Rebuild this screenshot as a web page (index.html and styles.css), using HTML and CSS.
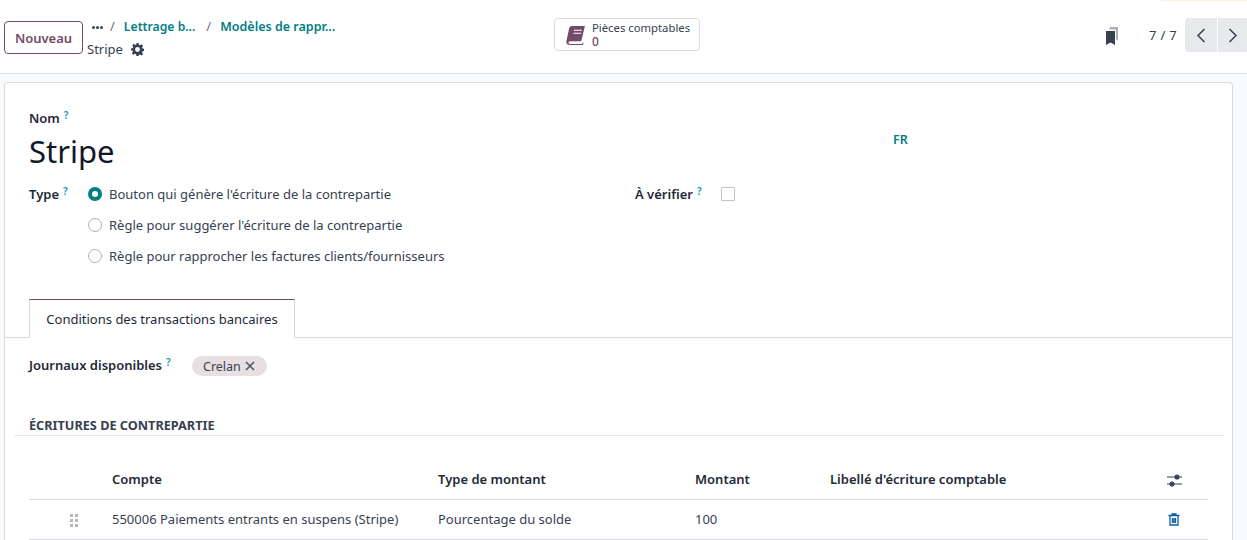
FILE: index.html
```html
<!DOCTYPE html>
<html lang="fr">
<head>
<meta charset="utf-8">
<title>Stripe</title>
<link rel="stylesheet" href="styles.css">
</head>
<body>
<div class="top-strip"></div>
<header class="control">
  <div class="left">
    <button class="btn-new">Nouveau</button>
    <div class="crumbs">
      <div class="crumb-row">
        <svg class="dots" width="11" height="3" viewBox="0 0 11 3"><circle cx="1.500" cy="1.500" r="1.500"/><circle cx="5.500" cy="1.500" r="1.500"/><circle cx="9.500" cy="1.500" r="1.500"/></svg>
        <span class="sep sep-a">/</span>
        <a class="crumb crumb-a">Lettrage b...</a>
        <span class="sep sep-b">/</span>
        <a class="crumb crumb-b">Modèles de rappr...</a>
      </div>
      <div class="crumb-current">
        <span>Stripe</span>
        <svg class="gear" width="13" height="13" viewBox="0 0 24 24"><path fill-rule="evenodd" d="M10 0h4l.7 3.400 2 .8L19.600 2.300l2.800 2.800-1.900 2.900.8 2 3.400.7v4l-3.400.7-.8 2 1.900 2.900-2.800 2.800-2.900-1.900-2 .8L14 24h-4l-.7-3.400-2-.8-2.900 1.900-2.800-2.800 1.900-2.900-.8-2L0 14v-4l3.400-.7.8-2-1.900-2.900 2.800-2.800 2.900 1.900 2-.8zM12 7.500a4.500 4.500 0 1 0 0 9 4.500 4.500 0 0 0 0-9z"/></svg>
      </div>
    </div>
  </div>
  <div class="center">
    <button class="stat">
      <svg class="book" width="20" height="21" viewBox="0 0 19 20"><path d="M5.500 1H18l-.3 1.200L14.500 15.500H4.200C3 15.500 2.500 16.100 2.400 16.700 2.300 17.400 2.800 18 3.800 18h11.400l.6-.9.900-.6-.5 2.500H3.200C1.300 19 0 17.700.3 15.800L3 3.200C3.300 1.900 4.200 1 5.500 1z"/><path class="book-line" d="M7.500 5h7.500M7 7.800h7.500" /></svg>
      <span class="stat-text"><span class="stat-label">Pièces comptables</span><span class="stat-value">0</span></span>
    </button>
  </div>
  <div class="right">
    <svg class="bookmarks" width="14" height="18" viewBox="0 0 14 18"><path class="bm-back" d="M4.500 0H13v13.500L11 12V2.500H4.500z"/><path d="M1 4h9v14l-4.500-2.500L1 18z"/></svg>
    <span class="pager">7 / 7</span>
    <div class="pager-btns">
      <button class="nav nav-prev"><svg width="10" height="15" viewBox="0 0 10 15"><path d="M8.500 1 2 7.500 8.500 14"/></svg></button>
      <button class="nav nav-next"><svg width="10" height="15" viewBox="0 0 10 15"><path d="M1.500 1 8 7.500 1.500 14"/></svg></button>
    </div>
  </div>
</header>
<main class="content">
  <section class="sheet">
    <div class="head">
      <div class="name-label"><b>Nom</b><sup class="help">?</sup></div>
      <div class="title-row">
        <h1>Stripe</h1>
        <span class="lang">FR</span>
      </div>
    </div>
    <div class="fields">
      <div class="type-col">
        <div class="field-label type-label"><b>Type</b><sup class="help">?</sup></div>
        <div class="radios">
          <div class="radio-row"><span class="radio on"></span>Bouton qui génère l'écriture de la contrepartie</div>
          <div class="radio-row"><span class="radio"></span>Règle pour suggérer l'écriture de la contrepartie</div>
          <div class="radio-row"><span class="radio"></span>Règle pour rapprocher les factures clients/fournisseurs</div>
        </div>
      </div>
      <div class="verify">
        <div class="field-label verify-label"><b>À vérifier</b><sup class="help">?</sup></div>
        <span class="check"></span>
      </div>
    </div>
    <div class="tabs"><div class="tab">Conditions des transactions bancaires</div></div>
    <div class="journal">
      <div class="field-label journal-label"><b>Journaux disponibles</b><sup class="help">?</sup></div>
      <span class="tag">Crelan<svg width="10" height="10" viewBox="0 0 10 10"><path d="M1 1l8 8M9 1 1 9"/></svg></span>
    </div>
    <div class="separator">ÉCRITURES DE CONTREPARTIE</div>
    <table class="lines">
      <thead>
        <tr>
          <th class="c-h"></th>
          <th class="c-a">Compte</th>
          <th class="c-t">Type de montant</th>
          <th class="c-m">Montant</th>
          <th class="c-l">Libellé d'écriture comptable</th>
          <th class="c-o"><svg class="sliders" width="15" height="13" viewBox="0 0 15 13"><path d="M0 3h15M0 10h15"/><circle cx="10" cy="3" r="2"/><circle cx="5" cy="10" r="2"/></svg></th>
        </tr>
      </thead>
      <tbody>
        <tr>
          <td class="c-h"><svg class="grip" width="9" height="13" viewBox="0 0 9 13"><path d="M0 0h3v3H0zM5 0h3v3H5zM0 5h3v3H0zM5 5h3v3H5zM0 10h3v3H0zM5 10h3v3H5z"/></svg></td>
          <td class="c-a">550006 Paiements entrants en suspens (Stripe)</td>
          <td class="c-t">Pourcentage du solde</td>
          <td class="c-m">100</td>
          <td class="c-l"></td>
          <td class="c-o"><svg class="trash" width="12" height="13" viewBox="0 0 12 13"><path d="M4 2V1h4v1M.5 2.500h11M2 2.500V12h8V2.500M4.500 5v5M6 5v5M7.500 5v5"/></svg></td>
        </tr>
      </tbody>
    </table>
  </section>
</main>
</body>
</html>
```
FILE: styles.css
```css
* { box-sizing: border-box; }
html, body { margin: 0; height: 540px; overflow: hidden; }
body {
  font-family: "Noto Sans", "Open Sans", sans-serif;
  font-size: 13px;
  color: #374151;
  background: #fff;
  position: relative;
}
button { font-family: inherit; }
.top-strip { position: absolute; top: 0; right: 0; width: 87px; height: 1px; background: #fdf3df; }
.control {
  height: 74px;
  border-bottom: 1px solid #d8dadd;
  background: #fff;
  display: grid;
  grid-template-columns: 554px 1fr auto;
  align-items: start;
}
.left { display: flex; padding: 21px 0 0 4px; }
.btn-new {
  width: 79px; height: 33px;
  border: 1px solid #714b67; border-radius: 4px;
  background: #fff; color: #714b67;
  font-size: 13px; font-weight: 600; padding: 0;
}
.crumbs { margin: -4px 0 0 4px; }
.crumb-row { display: flex; align-items: center; height: 18px; padding-left: 5px; }
.dots { fill: #374151; margin-top: 2px; width: 11px; }
.sep { color: #6b7280; font-size: 13px; }
.sep-a { margin: 0 9px 0 7px; }
.sep-b { margin: 0 9px 0 11px; }
.crumb { color: #017e84; font-weight: 600; font-size: 12.200px; white-space: nowrap; }
.crumb-b { font-size: 12.500px; }
.crumb-current { display: flex; align-items: center; gap: 8px; height: 22px; margin-top: 3px; }
.crumb-current span { font-size: 13px; }
.gear { fill: #374151; }
.center { padding-top: 18px; }
.stat {
  display: flex; align-items: center; gap: 6px;
  width: 146px; height: 33px;
  border: 1px solid #d8dadd; border-radius: 4px;
  background: #fff; padding: 1px 0 0 11px; color: #374151;
}
.book { fill: #714b67; flex: none; }
.book-line { stroke: #fff; stroke-width: 1; fill: none; }
.stat-text { display: flex; flex-direction: column; text-align: left; line-height: 14px; font-size: 11.300px; white-space: nowrap; }
.stat-value { color: #714b67; font-weight: 500; font-size: 12px; }
.right { display: flex; align-items: center; padding-top: 18px; height: 52px; }
.bookmarks { fill: #374151; margin-right: 30px; margin-top: 2px; }
.bm-back { fill: #adb0b6; }
.pager { margin-right: 8px; font-size: 13px; letter-spacing: .3px; }
.pager-btns { display: flex; gap: 1px; }
.nav {
  height: 34px; border: 0; background: #e7e9ed; padding: 0;
  display: flex; align-items: center; justify-content: center;
}
.nav-prev { width: 32px; border-radius: 4px 0 0 4px; }
.nav-next { width: 29px; }
.nav svg { fill: none; stroke: #374151; stroke-width: 1.500; }
.content { background: #f9fafb; height: 466px; padding: 8px 14px 0 4px; }
.sheet {
  background: #fff;
  border: 1px solid #d8dadd;
  border-bottom: 0;
  border-radius: 4px 4px 0 0;
  height: 458px;
  overflow: hidden;
}
.head { padding: 25px 24px 0 24px; }
.name-label { line-height: 20px; color: #111827; }
b { font-weight: 600; color: #1f2937; }
.help { color: #0d9bb5; font-size: 10px; font-weight: 600; margin-left: 4px; vertical-align: 4px; line-height: 0; }
.title-row { display: flex; height: 47px; position: relative; }
h1 { margin: 0; font-size: 31px; line-height: 47px; font-weight: 400; color: #111827; width: 864px; }
.lang { color: #017e84; font-weight: 600; font-size: 12.500px; padding-top: 3px; }
.fields { display: grid; grid-template-columns: 606px 1fr; padding: 9px 24px 0; }
.type-col { display: flex; }
.field-label { line-height: 20px; white-space: nowrap; }
.type-label { width: 59px; }
.radios { display: flex; flex-direction: column; gap: 11px; }
.radio-row { display: flex; align-items: center; gap: 7px; height: 20px; color: #374151; }
.radio { width: 14px; height: 14px; border-radius: 50%; border: 1px solid #adb0b6; background: #fff; flex: none; }
.radio.on { border: 4px solid #017e84; }
.verify { display: flex; }
.verify-label { width: 86px; }
.check { width: 14px; height: 14px; border: 1px solid #bfc2c6; border-radius: 1px; margin-top: 3px; }
.tabs { margin-top: 33px; height: 39px; border-bottom: 1px solid #d8dadd; padding-left: 24px; }
.tab {
  width: 266px; height: 39px;
  border: 1px solid #d8dadd; border-top-color: #714b67; border-bottom: 0;
  background: #fff;
  color: #1f2937;
  display: flex; align-items: center; justify-content: center;
}
.journal { display: flex; align-items: center; padding: 0 24px; height: 54px; }
.journal-label { width: 163px; }
.tag {
  display: inline-flex; align-items: center; gap: 4px;
  height: 20px; padding: 1px 12px 0 11px; border-radius: 10px;
  background: #e7dfe0; color: #374151; font-size: 12.500px; margin-top: 1px;
}
.tag svg { stroke: #4b5563; stroke-width: 1.600; fill: none; margin-top: -1px; }
.separator {
  margin: 24px 8px 0 9px;
  padding: 0 0 0 15px; border-bottom: 1px solid #e7e9ed;
  font-size: 12.700px; font-weight: 700; color: #374151; line-height: 19px; height: 20px;
}
.lines { border-collapse: collapse; table-layout: fixed; width: 1179px; margin: 23px 0 0 24px; }
.lines th { text-align: left; font-weight: 600; color: #1f2937; height: 40px; padding: 0; border-bottom: 1px solid #d8dadd; }
.lines td { height: 40px; padding: 0; border-bottom: 1px solid #d8dadd; color: #374151; }
.c-h { width: 83px; }
.c-a { width: 326px; }
.c-t { width: 257px; }
.c-m { width: 135px; }
.c-l { width: 321px; }
.c-o { width: 57px; }
.lines th.c-o { padding-left: 16px; }
.lines td.c-o { padding-left: 17px; padding-bottom: 2px; }
.lines .c-h { text-align: left; padding-left: 41px; }
.grip { fill: #b4b7bc; vertical-align: middle; }
.sliders { stroke: #374151; stroke-width: 1.100; fill: #374151; vertical-align: middle; }
.trash { stroke: #0a5fa8; stroke-width: 1.300; fill: none; vertical-align: middle; }
```
